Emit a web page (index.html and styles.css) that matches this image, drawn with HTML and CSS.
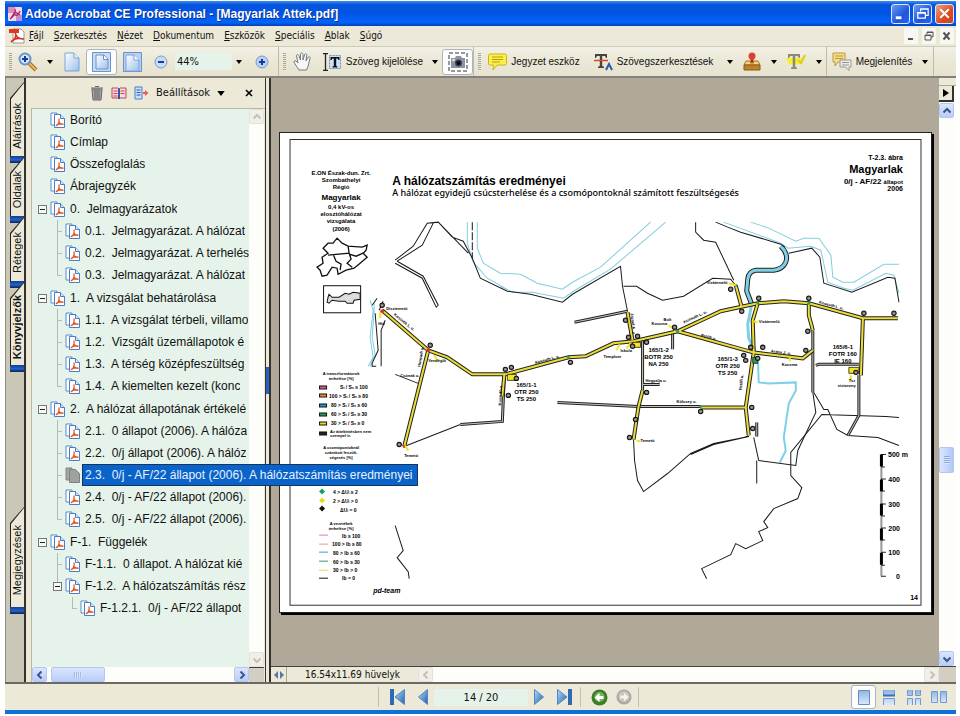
FILE: index.html
```html
<!DOCTYPE html>
<html lang="hu">
<head>
<meta charset="utf-8">
<title>Adobe Acrobat CE Professional - [Magyarlak Attek.pdf]</title>
<link rel="stylesheet" href="styles.css">
</head>
<body>
<svg class="defs" aria-hidden="true">
  <defs>
    <linearGradient id="gPage" x1="0" y1="0" x2="1" y2="1"><stop offset="0" stop-color="#fff"/><stop offset="1" stop-color="#9cc0ec"/></linearGradient>
    <linearGradient id="gBlue" x1="0" y1="0" x2="1" y2="1"><stop offset="0" stop-color="#b5dcf7"/><stop offset="1" stop-color="#1b62ae"/></linearGradient>
    <linearGradient id="gTile" x1="0" y1="0" x2="0" y2="1"><stop offset="0" stop-color="#8fb4e2"/><stop offset="1" stop-color="#dceafa"/></linearGradient>
  </defs>
  <symbol id="doc" viewBox="0 0 16 16">
    <path d="M1 1h6v12H1z" fill="#fff" stroke="#5b8bd0"/>
    <path d="M4.500 2.500h6l4 4v9h-10z" fill="#fff" stroke="#4a7cc8"/>
    <path d="M10.500 2.500v4h4" fill="#dbe8fa" stroke="#4a7cc8"/>
    <path d="M6 14c2-1 3.500-4 3-7.500M8.500 10c1.500 2 3 2.500 5 2.200M6 14c1-2 4-2.500 7.500-1.800" fill="none" stroke="#e4551f" stroke-width="1.300"/>
  </symbol>
  <symbol id="docgray" viewBox="0 0 16 16">
    <path d="M1 1h6v12H1z" fill="#a5a5a5" stroke="#858585"/>
    <path d="M4.500 2.500h6l4 4v9h-10z" fill="#a0a0a0" stroke="#808080"/>
  </symbol>
  <symbol id="page" viewBox="0 0 16 20">
    <path d="M1 1h9l5 5v13H1z" fill="url(#gPage)" stroke="#7ba3d8"/>
    <path d="M10 1v5h5" fill="#eef5fd" stroke="#7ba3d8"/>
  </symbol>
  <symbol id="down" viewBox="0 0 6 4"><path d="M0 0h6L3 4z" fill="#000"/></symbol>
  <symbol id="left" viewBox="0 0 8 8"><path d="M5.500 0.500L2 4l3.500 3.500" fill="none" stroke="currentColor" stroke-width="2"/></symbol>
  <symbol id="right" viewBox="0 0 8 8"><path d="M2.500 0.500L6 4 2.500 7.500" fill="none" stroke="currentColor" stroke-width="2"/></symbol>
  <symbol id="up" viewBox="0 0 8 8"><path d="M0.500 5.500L4 2l3.500 3.500" fill="none" stroke="currentColor" stroke-width="2"/></symbol>
  <symbol id="dn" viewBox="0 0 8 8"><path d="M0.500 2.500L4 6l3.500-3.500" fill="none" stroke="currentColor" stroke-width="2"/></symbol>
</svg>

<div class="window">
  <header class="titlebar">
    <svg class="app-icon" viewBox="0 0 14 14"><rect width="14" height="14" rx="1" fill="#f3d9ea"/><path d="M0 0h7v6H0z" fill="#e58bb0"/><path d="M8 8h6v6H8z" fill="#c58ad0"/><path d="M2 12C6 9 8 5 7 2M6 7c2 2 4 2 6-3M3 11l4-6 5 3" fill="none" stroke="#a4206a" stroke-width="1.300"/></svg>
    <h1>Adobe Acrobat CE Professional - [Magyarlak Attek.pdf]</h1>
    <div class="win-buttons">
      <button aria-label="Kis méret"><svg viewBox="0 0 18 18"><path d="M4 12h6v3H4z" fill="#fff"/></svg></button>
      <button aria-label="Előző méret"><svg viewBox="0 0 18 18"><path d="M7 7V4h8v7h-3M7 4.500h8M4 8h8v6H4zM4 8.500h8" fill="none" stroke="#fff" stroke-width="1.300"/></svg></button>
      <button class="close" aria-label="Bezárás"><svg viewBox="0 0 18 18"><path d="M4.500 4.500l9 9M13.500 4.500l-9 9" stroke="#fff" stroke-width="2"/></svg></button>
    </div>
  </header>

  <nav class="menubar">
    <svg class="menu-icon" viewBox="0 0 16 16"><path d="M4 1h8l3 3v11H4z" fill="#fff" stroke="#999"/><path d="M0 1h10v4H0z" fill="#dd3a22"/><path d="M2 14C7 11 8 8 6 4M7 7c1 3 4 4 8 4M2 14c3-4 8-4 13-3" fill="none" stroke="#d8301c" stroke-width="1.600"/></svg>
    <button><u>F</u>ájl</button>
    <button><u>S</u>zerkesztés</button>
    <button><u>N</u>ézet</button>
    <button><u>D</u>okumentum</button>
    <button><u>E</u>szközök</button>
    <button><u>S</u>peciális</button>
    <button><u>A</u>blak</button>
    <button><u>S</u>úgó</button>
    <div class="doc-buttons">
      <button aria-label="Dokumentum kis mérete"><svg viewBox="0 0 14 14"><path d="M4 9h5v2H4z" fill="#555"/></svg></button>
      <button aria-label="Dokumentum előző mérete"><svg viewBox="0 0 14 14"><path d="M5 5V3h6v5H9M5 3.500h6M3 6h6v5H3zM3 6.500h6" fill="none" stroke="#555"/></svg></button>
      <button aria-label="Dokumentum bezárása"><svg viewBox="0 0 14 14"><path d="M3.500 3.500l6 7M9.500 3.500l-6 7" stroke="#555" stroke-width="2"/></svg></button>
    </div>
  </nav>

  <div class="toolbar">
    <div class="group zoom-group">
      <span class="grip"></span>
      <button aria-label="Nagyítás"><svg width="20" height="20" viewBox="0 0 20 20"><path d="M11 11l7 7" stroke="#a06a20" stroke-width="4"/><path d="M11 11l7 7" stroke="#f0b957" stroke-width="2"/><circle cx="7" cy="7" r="5.500" fill="#d4e8fb" stroke="#6b93cb" stroke-width="2"/><path d="M4 7h6M7 4v6" stroke="#173a9c" stroke-width="2"/></svg></button>
      <button aria-label="Nagyítási eszközök"><svg width="6" height="4"><use href="#down"/></svg></button>
      <button aria-label="Tényleges méret"><svg width="16" height="20"><use href="#page"/></svg></button>
      <button class="on" aria-label="Teljes oldal"><svg width="19" height="20" viewBox="0 0 19 20"><path d="M.500.500h18v19H.500z" fill="#c9dbf2" stroke="#6b93cb"/><path d="M4 3h8l4 4v10H4z" fill="url(#gPage)" stroke="#6b93cb"/><path d="M11.500 3v4.500H16" fill="#fff" stroke="#6b93cb"/></svg></button>
      <button aria-label="Oldalszélesség"><svg width="19" height="20" viewBox="0 0 19 20"><path d="M.500.500h18v19H.500z" fill="#b7d0f0" stroke="#6b93cb"/><path d="M3 3h8l5 5v11H3z" fill="url(#gPage)" stroke="#7ba3d8"/><path d="M11 3v5h5" fill="#fff" stroke="#7ba3d8"/></svg></button>
      <button aria-label="Kicsinyítés"><svg width="14" height="14" viewBox="0 0 14 14"><circle cx="7" cy="7" r="6" fill="#c8dcf5" stroke="#7d9bc8"/><path d="M4 7h6" stroke="#173a9c" stroke-width="2"/></svg></button>
      <input class="field" type="text" value="44%" aria-label="Nagyítás mértéke">
      <button aria-label="Nagyítások listája"><svg width="6" height="4"><use href="#down"/></svg></button>
      <button aria-label="Nagyítás lépésenként"><svg width="14" height="14" viewBox="0 0 14 14"><circle cx="7" cy="7" r="6" fill="#b8d1f3" stroke="#7d9bc8"/><path d="M4 7h6M7 4v6" stroke="#173a9c" stroke-width="2"/></svg></button>
    </div>
    <div class="group select-group">
      <span class="grip"></span>
      <button aria-label="Kéz eszköz"><svg width="20" height="20" viewBox="0 0 20 20"><path d="M6 18C4 15 2 12 1 10c0-2 2-1.500 4 1L3.500 4c0-2 2-2 2.500 0l1.500 4V2.500c0-2 2.300-2 2.500 0V8l1.500-5c.5-2 2.500-1.500 2.200.5L13 9l2-3.500c1-1.500 2.700-.5 2 1-1 3-1.500 8-3.500 11.500z" fill="#f7f7f7" stroke="#77797f"/></svg></button>
      <button><svg width="20" height="18" viewBox="0 0 20 18"><path d="M1 .500h5M1 17.500h5M3.500.500v17" stroke="#222" stroke-width="1.300"/><path d="M7.500 2.500h11v13h-11z" fill="#cfdff4" stroke="#6f8fbf" stroke-dasharray="2 1"/><path d="M8.500 4h9v3h-1l-1-1.500h-1.300V13l1.300.5v1h-5v-1l1.300-.5V5.500h-1.300l-1 1.500h-1z" fill="#111"/></svg>Szöveg kijelölése</button>
      <button aria-label="Kijelölő eszközök"><svg width="6" height="4"><use href="#down"/></svg></button>
      <button class="on" aria-label="Pillanatkép"><svg width="20" height="20" viewBox="0 0 20 20"><path d="M1 1h18v18H1z" fill="#fff" stroke="#333" stroke-dasharray="4 2"/><path d="M3 6h4l1-2h5l1 2h3v10H3z" fill="#8c93a2"/><circle cx="10.500" cy="11" r="3.500" fill="#3a4050"/><circle cx="10.500" cy="11" r="2" fill="#0c0d14"/><circle cx="5.500" cy="8" r="1.300" fill="#dfe5ee"/></svg></button>
    </div>
    <div class="group comment-group">
      <span class="grip"></span>
      <button><svg width="19" height="18" viewBox="0 0 19 18"><path d="M2 1h15q1.500 0 1.500 1.500v8q0 1.500-1.500 1.500H9l-4 5 .5-5H2Q.500 12 .500 10.500v-8Q.500 1 2 1z" fill="#fbf04a" stroke="#c9b51a"/><path d="M4 4h11M4 6.500h11M4 9h8" stroke="#b5a010"/></svg>Jegyzet eszköz</button>
      <button><svg width="19" height="20" viewBox="0 0 19 20"><path d="M1 2h12v4h-1l-1-2H8.200v10l1.800.7V16H4v-1.300l1.800-.7V4H3L2 6H1z" fill="#444"/><path d="M0 8.500h14" stroke="#e0452a" stroke-width="1.500"/><path d="M12 18l3-6 3 6" fill="none" stroke="#3456b4" stroke-width="2"/></svg>Szövegszerkesztések</button>
      <button aria-label="Szövegszerkesztések listája"><svg width="6" height="4"><use href="#down"/></svg></button>
      <button aria-label="Bélyegző"><svg width="18" height="19" viewBox="0 0 18 19"><path d="M7.500 6h3v5h-3z" fill="#c03020"/><circle cx="9" cy="4" r="3.500" fill="#dc4030"/><path d="M3 9h4.500v2h3V9H15l2 4H1z" fill="#f4d284" stroke="#a87320"/><path d="M1 13h16v5H1z" fill="#bd812e" stroke="#8a5a16"/></svg></button>
      <button aria-label="Bélyegzők listája"><svg width="6" height="4"><use href="#down"/></svg></button>
      <button aria-label="Kiemelés"><svg width="20" height="17" viewBox="0 0 20 17"><path d="M0 5h18l-2 6H3z" fill="#f8ee30"/><path d="M2 1h12v4h-1l-1.500-2H9.300v11l1.700.7V16H5v-1.300l1.700-.7V3H4.500L3 5H2z" fill="#8b8b7a"/><path d="M12 7l3 3 4-8" fill="none" stroke="#dccb2a" stroke-width="2"/></svg></button>
      <button aria-label="Kiemelések listája"><svg width="6" height="4"><use href="#down"/></svg></button>
    </div>
    <div class="group show-group">
      <button><svg width="20" height="19" viewBox="0 0 20 19"><path d="M1 1h12v9H6l-3 4V10H1z" fill="#f6dc86" stroke="#b99a45"/><path d="M3 4h8M3 6.500h8" stroke="#b99a45"/><path d="M8 8h11v7h-2v3.500L13.500 15H8z" fill="#e9e9e6" stroke="#999"/><path d="M10 10.500h7M10 13h7" stroke="#999"/></svg>Megjelenítés</button>
      <button aria-label="Megjelenítés listája"><svg width="6" height="4"><use href="#down"/></svg></button>
    </div>
  </div>

  <main class="body">
    <div class="tabs">
      <button class="tab t1"><span>Aláírások</span></button>
      <button class="tab t2"><span>Oldalak</span></button>
      <button class="tab t3"><span>Rétegek</span></button>
      <button class="tab t4"><span>Könyvjelzők</span></button>
      <button class="tab t5"><span>Megjegyzések</span></button>
    </div>

    <aside class="panel">
      <div class="panel-head">
        <button aria-label="Törlés"><svg width="14" height="16" viewBox="0 0 14 16"><path d="M2 4h10l-1 11H3z" fill="#a5a5a5" stroke="#666"/><path d="M1 3h12M5 1.500h4M5 5v9M7 5v9M9 5v9" stroke="#666"/></svg></button>
        <button aria-label="Új könyvjelző"><svg width="16" height="14" viewBox="0 0 16 14"><path d="M1 2h6l1 1 1-1h6v10H9l-1 1-1-1H1z" fill="#f8dcdc" stroke="#b04a55"/><path d="M8 3v10" stroke="#3057b5" stroke-width="2"/><path d="M2.500 5h4M2.500 7.500h4M9.500 5h4M9.500 7.500h4M2.500 10h4" stroke="#d0404a"/></svg></button>
        <button aria-label="Kibontás"><svg width="15" height="14" viewBox="0 0 15 14"><path d="M1 1h7v12H1z" fill="#cfe1f7" stroke="#4a7cc8"/><path d="M2.500 4h4M2.500 6.500h4M2.500 9h4" stroke="#2858b0"/><path d="M9 7h3" stroke="#e06050" stroke-width="2"/><path d="M11 4l3.500 3L11 10z" fill="#e06050"/></svg></button>
        <button class="options">Beállítások<svg width="8" height="5" viewBox="0 0 6 4"><path d="M0 0h6L3 4z"/></svg></button>
        <button class="panel-close" aria-label="Panel bezárása"><svg width="8" height="8" viewBox="0 0 8 8"><path d="M1 1l6 6M7 1L1 7" stroke="#000" stroke-width="1.600"/></svg></button>
      </div>
      <div class="tree-area">
        <ul class="tree">
          <li><div class="row"><svg class="ico"><use href="#doc"/></svg><span>Borító</span></div></li>
          <li><div class="row"><svg class="ico"><use href="#doc"/></svg><span>Címlap</span></div></li>
          <li><div class="row"><svg class="ico"><use href="#doc"/></svg><span>Összefoglalás</span></div></li>
          <li><div class="row"><svg class="ico"><use href="#doc"/></svg><span>Ábrajegyzék</span></div></li>
          <li class="branch"><div class="row"><button class="toggle" aria-label="Összecsukás"></button><svg class="ico"><use href="#doc"/></svg><span>0.  Jelmagyarázatok</span></div>
            <ul>
              <li><div class="row"><svg class="ico"><use href="#doc"/></svg><span>0.1.  Jelmagyarázat. A hálózat</span></div></li>
              <li><div class="row"><svg class="ico"><use href="#doc"/></svg><span>0.2.  Jelmagyarázat. A terhelés</span></div></li>
              <li><div class="row"><svg class="ico"><use href="#doc"/></svg><span>0.3.  Jelmagyarázat. A hálózat</span></div></li>
            </ul></li>
          <li class="branch"><div class="row"><button class="toggle" aria-label="Összecsukás"></button><svg class="ico"><use href="#doc"/></svg><span>1.  A vizsgálat behatárolása</span></div>
            <ul>
              <li><div class="row"><svg class="ico"><use href="#doc"/></svg><span>1.1.  A vizsgálat térbeli, villamo</span></div></li>
              <li><div class="row"><svg class="ico"><use href="#doc"/></svg><span>1.2.  Vizsgált üzemállapotok é</span></div></li>
              <li><div class="row"><svg class="ico"><use href="#doc"/></svg><span>1.3.  A térség középfeszültség</span></div></li>
              <li><div class="row"><svg class="ico"><use href="#doc"/></svg><span>1.4.  A kiemelten kezelt (konc</span></div></li>
            </ul></li>
          <li class="branch"><div class="row"><button class="toggle" aria-label="Összecsukás"></button><svg class="ico"><use href="#doc"/></svg><span>2.  A hálózat állapotának értékelé</span></div>
            <ul>
              <li><div class="row"><svg class="ico"><use href="#doc"/></svg><span>2.1.  0 állapot (2006). A hálóza</span></div></li>
              <li><div class="row"><svg class="ico"><use href="#doc"/></svg><span>2.2.  0/j állapot (2006). A hálóz</span></div></li>
              <li><div class="row"><svg class="ico"><use href="#docgray"/></svg><span class="picked">2.3.  0/j - AF/22 állapot (2006). A hálózatszámítás eredményei</span></div></li>
              <li><div class="row"><svg class="ico"><use href="#doc"/></svg><span>2.4.  0/j - AF/22 állapot (2006).</span></div></li>
              <li><div class="row"><svg class="ico"><use href="#doc"/></svg><span>2.5.  0/j - AF/22 állapot (2006).</span></div></li>
            </ul></li>
          <li class="branch"><div class="row"><button class="toggle" aria-label="Összecsukás"></button><svg class="ico"><use href="#doc"/></svg><span>F-1.  Függelék</span></div>
            <ul>
              <li><div class="row"><svg class="ico"><use href="#doc"/></svg><span>F-1.1.  0 állapot. A hálózat kié</span></div></li>
              <li><div class="row"><button class="toggle" aria-label="Összecsukás"></button><svg class="ico"><use href="#doc"/></svg><span>F-1.2.  A hálózatszámítás rész</span></div>
                <ul>
                  <li><div class="row"><svg class="ico"><use href="#doc"/></svg><span>F-1.2.1.  0/j - AF/22 állapot</span></div></li>
                </ul></li>
            </ul></li>
        </ul>
        <div class="vscroll off">
          <button aria-label="Fel"><svg width="8" height="8"><use href="#up"/></svg></button>
          <button aria-label="Le"><svg width="8" height="8"><use href="#dn"/></svg></button>
        </div>
        <div class="hscroll">
          <button aria-label="Balra"><svg width="8" height="8"><use href="#left"/></svg></button>
          <span class="thumb"></span>
          <button aria-label="Jobbra"><svg width="8" height="8"><use href="#right"/></svg></button>
        </div>
        <span class="corner"></span>
      </div>
    </aside>

    <div class="splitter"><span></span></div>

    <section class="viewer">
      <div class="canvas">
        <svg class="sheet" viewBox="280 133 650 479" role="img" aria-label="A hálózatszámítás eredményei">
          <defs>
            <g id="n"><circle r="2.200" fill="#777" stroke="#111"/><path d="M-1 0h2" stroke="#ccc" stroke-width=".600"/></g>
          </defs>
          <rect x="290" y="139.500" width="630" height="465" fill="none" stroke="#333"/>

          <g class="mid bold">
            <text class="s6" x="341" y="175">E.ON Észak-dun. Zrt.</text>
            <text class="s6" x="341" y="182">Szombathelyi</text>
            <text class="s6" x="341" y="189">Régió</text>
            <text class="s8" x="341" y="200">Magyarlak</text>
            <text class="s6" x="341" y="209">0,4 kV-os</text>
            <text class="s6" x="341" y="216">elosztóhálózat</text>
            <text class="s6" x="341" y="223">vizsgálata</text>
            <text class="s6" x="341" y="231">(2006)</text>
          </g>
          <text class="s12 bold" x="392" y="185">A hálózatszámítás eredményei</text>
          <text class="s9 subtitle" x="392" y="196">A hálózat egyidejű csúcsterhelése és a csomópontoknál számított feszültségesés</text>
          <g class="end">
            <text class="s7 bold" x="902" y="160">T-2.3. ábra</text>
            <text class="s11 bold" x="902" y="173">Magyarlak</text>
            <text class="s8 bold" x="902" y="184">0/j - AF/22 <tspan class="s6">állapot</tspan></text>
            <text class="s7 bold" x="902" y="191">2006</text>
          </g>

          <g fill="none" stroke="#111" stroke-width="1.300">
            <path d="M337 238L342 243 348 246 362 247 367 245 366 250 363 253 367 257 360 263 354 268 346 270 338 274 337 268 332 267 327 275 322 276 320 270 317 267 323 263 322 257 328 253 323 248 328 243 333 243Z"/>
            <path d="M348 246L349 253 328 255 M333 254L336 261 341 264 340 270 M349 253L351 259 347 263 352 267 M349 254L356 256 363 253"/>
            <rect x="323.500" y="285.500" width="37" height="27" stroke-width="1"/>
            <path d="M329 294l3 3 7 0 6-4 4 1 4-2 7 1v6l-6 1-1 3h-6l-2-2h-6l-7-1-3 3-2-1 1-5z" fill="#ddd" stroke-width="1"/>
          </g>

          <g class="water">
            <path d="M467 222v21l6 19 14 16 23 13M477 222v26l6 15 17 10 20 1 17 9 25 6 10-7 28-15 50-45M500 286l12 6h20l31 6 10-7 37-22 55-47"/>
            <path d="M723 222l57 21 7 5 23-2 10 4 7 32 16 6 9 2 33-17 8 2 5 18M750 222l18 6 27 13 8-3h15l12 17 2 22 10 5h11l30-18h15"/>
            <path d="M370 300l3 10-3 27 3 20-5 9M374 303v8l-2 26 3 17-5 12"/>
          </g>
          <path class="stream outline" d="M780 246q8 8 5 16-3 7-12 8h-18q-7 1-8 9l-1 12 5 13"/>
          <path class="stream" d="M780 246q8 8 5 16-3 7-12 8h-18q-7 1-8 9l-1 12 5 13-4 20 1 14 6 12"/>
          <path class="stream thin" d="M757 355l1 27 10 1 27-1v8l-7 13-5 34 2 13-6 12"/>

          <g class="land">
            <path d="M395 260l18-14 14-23 11-1 14 15 11 4 9 17 8 20 27 13 23 3 32 8 10-8 48-28 2 20 5 25 5 26M397 261l25-16 11-22M438 222l30 31"/>
            <path d="M472 222v36" stroke-dasharray="8 2"/>
            <path d="M397 261l26 15 15 29-2 2-14-29-27-15"/>
            <path d="M623 286h13l11 7 15 7 21-4 29-18 18 1 4 5M695 222v10l8 8 12 2 18 38M715 222l12 5 13 5 40 12 4 3M788 253l23-5 8 9 4 26 28 9 36-15 7 1 4 24"/>
            <path d="M372 305l5-7M383 301l-4 9M375 313l3 37-6 13v3l4 0M385 320l-4 10v36M395 374l23 9M404 446l56-22"/>
            <path d="M633 439l1 21 3 20 6 11 24-18 23-20 23-10 35-7M690 454l23-10 35-8M753 437l5 23 37 5 2-15 18-38-3-20v-42M756 460v23"/>
            <path d="M813 392l10 17h4l9 20 11 6 30 2 21 8M898 417l-13-1-64-2-31 38v23l11 12-4 11-24 10-10 13 4 6-9 4 4 9-17 8-10-5-5 11-29 14 5 10"/>
            <path d="M395 525l8 25-6 7 11 14 1 7"/>
          </g>

          <g class="road-edge">
            <path d="M460 424l42-3 2-46M557 402l81 4 62 0M642 384h17M672 331v18M574 322l53-11M756 422v14M812 350v42M815 365l3-1h40M858 375v40l-11 20"/>
            <path d="M642 340v50M812 330v20"/>
          </g>
          <g class="road-gray">
            <path d="M460 424l42-3 2-46M557 402l81 4 62 0M642 384h17M672 331v18M574 322l53-11M756 422v14M812 350v42M815 365l3-1h40M858 375v40l-11 20"/>
            <path d="M642 340v50M812 330v20"/>
          </g>
          <g>
            <path class="road-edge wide" d="M382 310l46 40 19 7 25 17h33l63-17 17-1 28-13 20-2 44-10 43-20 37-8 26-2 25 2 54 15h35"/>
            <path class="road-edge wide" d="M428 350l-24 96M504 374l-2 22M677 331l75 21 50 6 10-8M735 285l6 22M757 303l-5 17 1 32-8 55 3 28M808 303v12l4 15M862 318l-2 57M642 390l-4 16-5 33M700 407h46M627 312l5 28"/>
            <path class="road" d="M382 310l46 40 19 7 25 17h33l63-17 17-1 28-13 20-2 44-10 43-20 37-8 26-2 25 2 54 15h35"/>
            <path class="road" d="M428 350l-24 96M504 374l-2 22M677 331l75 21 50 6 10-8M735 285l6 22M757 303l-5 17 1 32-8 55 3 28M808 303v12l4 15M862 318l-2 57M642 390l-4 16-5 33M700 407h46M627 312l5 28"/>
          </g>
          <g fill="#f5e615" stroke="#222" stroke-width=".800">
            <path d="M507 374h9v6h-9zM632 342h8v5h-8zM848 367h10v6h-10z"/>
            <path d="M752 357h5v6h-5z" fill="#1d9c66"/>
          </g>
          <g fill="#d8362a"><circle cx="382" cy="311" r="2"/><circle cx="428" cy="350" r="2"/><circle cx="404" cy="446" r="1.500"/></g>
          <g fill="#27a05e"><circle cx="677" cy="331" r="1.500"/><circle cx="757" cy="303" r="1.500"/><circle cx="568" cy="357" r="1.500"/><circle cx="700" cy="406" r="1.500"/><circle cx="735" cy="285" r="1.500"/><circle cx="808" cy="303" r="1.500"/></g>
          <path d="M408 450l-3-5M630 343l-4 5M619 344l-3 6M668 325l7 5M728 283l7 2M789 361v-4M850 375v5M434 355l3 5M636 440l4 1M753 321l4 1M380 318v-6" stroke="#f3e51c" stroke-width="2"/>
          <g>
            <use href="#n" x="382" y="305"/><use href="#n" x="430" y="345"/><use href="#n" x="399" y="444"/><use href="#n" x="505" y="369"/><use href="#n" x="511" y="367"/><use href="#n" x="516" y="378"/><use href="#n" x="508" y="395"/><use href="#n" x="570" y="362"/><use href="#n" x="625" y="320"/><use href="#n" x="628" y="337"/><use href="#n" x="637" y="336"/><use href="#n" x="646" y="342"/><use href="#n" x="632" y="346"/><use href="#n" x="674" y="327"/><use href="#n" x="730" y="289"/><use href="#n" x="741" y="311"/><use href="#n" x="758" y="298"/><use href="#n" x="808" y="298"/><use href="#n" x="863" y="313"/><use href="#n" x="893" y="313"/><use href="#n" x="807" y="331"/><use href="#n" x="805" y="350"/><use href="#n" x="750" y="347"/><use href="#n" x="762" y="347"/><use href="#n" x="743" y="355"/><use href="#n" x="757" y="358"/><use href="#n" x="745" y="360"/><use href="#n" x="646" y="392"/><use href="#n" x="700" y="411"/><use href="#n" x="751" y="407"/><use href="#n" x="752" y="428"/><use href="#n" x="629" y="437"/><use href="#n" x="635" y="419"/><use href="#n" x="855" y="372"/>
          </g>
          <g class="s4 bold">
            <text x="386" y="310">Dísztemető</text><text x="378" y="325">Híd</text><text x="400" y="377">Csónak u.</text><text x="428" y="362">Vendéglő</text><text x="404" y="457">Temető</text>
            <text x="603" y="358">Templom</text><text x="620" y="352">Iskola</text><text x="663" y="321">Bolt</text><text x="651" y="325">Kocsma</text><text x="706" y="284">Vízátemelő</text><text x="758" y="323">Vízátemelő</text><text x="640" y="442">Temető</text>
            <text x="781" y="366">Kocsma</text><text x="848" y="382">Tsz</text><text x="837" y="387">víztorony</text><text x="645" y="382">Hegyalja u.</text><text x="676" y="403">Kölcsey u.</text>
            <text transform="rotate(39 392 315)" x="393" y="314">Kossuth L. u.</text><text transform="rotate(-15 545 362)" x="535" y="361">Kossuth L. u.</text><text transform="rotate(-25 684 324)" x="684" y="323">Kossuth L. u.</text><text transform="rotate(15 700 336)" x="700" y="336">Petőfi u.</text><text transform="rotate(15 818 303)" x="818" y="303">Kossuth L. u.</text><text transform="rotate(7 770 352)" x="770" y="352">Arany J. u.</text><text transform="rotate(-84 742 390)" x="742" y="389">Petőfi u.</text><text transform="rotate(-80 422 367)" x="422" y="365">Hunyadi u.</text><text transform="rotate(-88 501 405)" x="501" y="405">Kossuth u.</text><text transform="rotate(84 630 313)" x="630" y="313">József A. u.</text>
          </g>
          <g class="s6 bold mid">
            <text x="526" y="387">165/1-1</text><text x="526" y="394">OTR 250</text><text x="526" y="401">TS 250</text>
            <text x="658" y="352">165/1-2</text><text x="658" y="359">BOTR 250</text><text x="658" y="366">NA 250</text>
            <text x="727" y="361">165/1-3</text><text x="727" y="368">OTR 250</text><text x="727" y="375">TS 250</text>
            <text x="842" y="349">165/6-1</text><text x="842" y="356">FOTR 160</text><text x="842" y="363">IE 160</text>
          </g>

          <g class="s4 bold mid">
            <text x="341" y="375">A transzformátorok</text><text x="341" y="380">terhelése [%]</text>
            <text x="341" y="449">A csomópontoknál</text><text x="341" y="454">számított feszült-</text><text x="341" y="459">ségesés [%]</text>
            <text x="341" y="524">A vezetékek</text><text x="341" y="529">terhelése [%]</text>
          </g>
          <g stroke="#111">
            <path d="M319.500 385.500h7v3h-7z" fill="#e2578f"/><path d="M319.500 393.500h7v3h-7z" fill="#ef8c3a"/><path d="M319.500 403.500h7v3h-7z" fill="#2396c8"/><path d="M319.500 412.500h7v3h-7z" fill="#18a050"/><path d="M319.500 421.500h7v3h-7z" fill="#eadb22"/><path d="M319.500 431.500h7v3h-7z" fill="#222"/>
          </g>
          <g class="s5 bold">
            <text x="340" y="389">S<tspan class="s3">t</tspan> / S<tspan class="s3">n</tspan> ≥ 100</text>
            <text x="329" y="398">100 &gt; S<tspan class="s3">t</tspan> / S<tspan class="s3">n</tspan> ≥ 80</text>
            <text x="331" y="407">80 &gt; S<tspan class="s3">t</tspan> / S<tspan class="s3">n</tspan> ≥ 60</text>
            <text x="331" y="416">60 &gt; S<tspan class="s3">t</tspan> / S<tspan class="s3">n</tspan> ≥ 30</text>
            <text x="331" y="425">30 &gt; S<tspan class="s3">t</tspan> / S<tspan class="s3">n</tspan> ≥ 0</text>
            <text class="s4" x="330" y="433">Az áttekintésben nem</text><text class="s4" x="330" y="437">szerepel tr.</text>
            <text x="333" y="493">4 &gt; ΔU<tspan class="s3">i</tspan> ≥ 2</text><text x="333" y="502">2 &gt; ΔU<tspan class="s3">i</tspan> &gt; 0</text><text x="340" y="511">ΔU<tspan class="s3">i</tspan> = 0</text>
            <text x="342" y="537">Ib ≥ 100</text><text x="332" y="545">100 &gt; Ib ≥ 80</text><text x="333" y="554">80 &gt; Ib ≥ 60</text><text x="333" y="563">60 &gt; Ib ≥ 30</text><text x="333" y="571">30 &gt; Ib &gt; 0</text><text x="342" y="579">Ib = 0</text>
          </g>
          <path d="M322 488l3 3-3 3-3-3z" fill="#18a060"/><path d="M322 497l3 3-3 3-3-3z" fill="#eadb22"/><path d="M322 505l3 3-3 3-3-3z" fill="#111"/>
          <g fill="none"><path d="M319 534.500h9" stroke="#e878b8"/><path d="M319 543.500h9" stroke="#ee9a80"/><path d="M319 551.500h9" stroke="#3ba0c8"/><path d="M319 560.500h9" stroke="#2f9c62"/><path d="M319 569.500h9" stroke="#e2dc50"/><path d="M319 577.500h9" stroke="#111"/></g>
          <text class="s7 bold ital" x="373" y="592">pd-team</text>

          <path d="M880.500 454v122M880 454h5M880 466.500h4M880 478.500h5M880 490.500h4M880 503.500h5M880 515.500h4M880 527.500h5M880 539.500h4M880 551.500h5M880 564.500h4M880 575.500h5" stroke="#222" fill="none"/>
          <path d="M880.500 454v12M880.500 479v12M880.500 503v12M880.500 528v12M880.500 552v12" stroke="#000" stroke-width="3"/>
          <path d="M880.500 467v11M880.500 491v12M880.500 516v11M880.500 540v11M880.500 565v10" stroke="#999" stroke-width="2"/>
          <g class="s7 bold end">
            <text x="907" y="457">500 m</text><text x="899" y="481">400</text><text x="899" y="506">300</text><text x="899" y="530">200</text><text x="899" y="554">100</text><text x="899" y="578">0</text>
            <text x="917" y="599">14</text>
          </g>
        </svg>
      </div>
      <div class="vscroll doc-scroll">
        <span class="split"></span>
        <button class="flyout" aria-label="Útmutató"><svg width="6" height="8" viewBox="0 0 6 8"><path d="M0 0l6 4-6 4z"/></svg></button>
        <button aria-label="Fel"><svg width="8" height="8"><use href="#up"/></svg></button>
        <span class="thumb"></span>
        <button aria-label="Le"><svg width="8" height="8"><use href="#dn"/></svg></button>
      </div>
      <div class="docbar">
        <button class="resize" aria-label="Átméretezés"><svg width="10" height="8" viewBox="0 0 10 8"><path d="M4 0v8L0 4zM6 0v8l4-4z" fill="#5677a8"/></svg></button>
        <span class="size">16.54x11.69 hüvelyk</span>
        <div class="hscroll off">
          <button aria-label="Balra"><svg width="8" height="8"><use href="#left"/></svg></button>
          <button aria-label="Jobbra"><svg width="8" height="8"><use href="#right"/></svg></button>
        </div>
      </div>
      <span class="corner"></span>
    </section>
  </main>

  <footer class="status">
    <div class="pager">
      <button aria-label="Első oldal"><svg width="15" height="16" viewBox="0 0 15 16"><path d="M0 0h4v16H0z" fill="#2c6cb4"/><path d="M14.500.500v15L5 8z" fill="url(#gBlue)" stroke="#4d86c2"/></svg></button>
      <button aria-label="Előző oldal"><svg width="10" height="16" viewBox="0 0 10 16"><path d="M9.500.500v15L.500 8z" fill="url(#gBlue)" stroke="#4d86c2"/></svg></button>
      <input class="field" type="text" value="14 / 20" aria-label="Oldal">
      <button aria-label="Következő oldal"><svg width="10" height="16" viewBox="0 0 10 16"><path d="M.500.500v15L9.500 8z" fill="url(#gBlue)" stroke="#4d86c2"/></svg></button>
      <button aria-label="Utolsó oldal"><svg width="15" height="16" viewBox="0 0 15 16"><path d="M11 0h4v16h-4z" fill="#2c6cb4"/><path d="M.500.500v15L10 8z" fill="url(#gBlue)" stroke="#4d86c2"/></svg></button>
      <span class="line"></span>
      <button aria-label="Előző nézet"><svg width="17" height="17" viewBox="0 0 17 17"><circle cx="8.500" cy="8.500" r="8" fill="#3f7d28"/><circle cx="8.500" cy="8" r="5" fill="#78b25a"/><path d="M3.500 8.500l5-4.500v3h4v3h-4v3z" fill="#fff"/></svg></button>
      <button aria-label="Következő nézet"><svg width="16" height="16" viewBox="0 0 17 17"><circle cx="8.500" cy="8.500" r="8" fill="#aaa79e"/><circle cx="8.500" cy="8" r="6" fill="#c7c5bd"/><path d="M13.500 8.500l-5-4.500v3h-4v3h4v3z" fill="#f4f3ee"/></svg></button>
      <span class="line"></span>
    </div>
    <div class="views">
      <button class="on" aria-label="Egy oldal"><svg width="12" height="15" viewBox="0 0 12 15"><path d="M.500.500h11v14H.500z" fill="url(#gTile)" stroke="#5f8fd0"/></svg></button>
      <button aria-label="Folyamatos"><svg width="14" height="15" viewBox="0 0 14 15"><path d="M1.500 0v5.500h11V0M1.500 15V8.500h11V15" fill="url(#gTile)" stroke="#6f9ad2"/><path d="M1 5.500h12" stroke="#3570b8" stroke-width="2"/></svg></button>
      <button aria-label="Folyamatos, szemközti"><svg width="14" height="15" viewBox="0 0 14 15"><path d="M.500 0v5.500h5V0M8.500 0v5.500h5V0M.500 15V8.500h5V15M8.500 15V8.500h5V15" fill="url(#gTile)" stroke="#6f9ad2"/></svg></button>
      <button aria-label="Szemközti"><svg width="16" height="12" viewBox="0 0 16 12"><path d="M.500.500h6v11h-6zM9.500.500h6v11h-6z" fill="url(#gTile)" stroke="#6f9ad2"/></svg></button>
    </div>
  </footer>
</div>
</body>
</html>
```
FILE: styles.css
```css
* { box-sizing: border-box; }

:root {
  --face: #ece9d8;
  --mint: #e6f3ea;
  --canvas: #b0a999;
  --ui: "DejaVu Sans Condensed", "DejaVu Sans", sans-serif;
  --text: "Liberation Sans", Arial, sans-serif;
}

body {
  margin: 0;
  background: #fff;
  font: 11px/14px var(--text);
  color: #111;
}

button {
  margin: 0;
  padding: 0;
  border: 0;
  background: none;
  color: inherit;
  font: inherit;
  display: flex;
  align-items: center;
  justify-content: center;
}

svg { display: block; flex: none; }
.defs { position: absolute; width: 0; height: 0; }

.window {
  display: flex;
  flex-direction: column;
  height: 100vh;
  border: solid #fff;
  border-width: 1px 4px 2px 5px;
}

/* Title bar */
.titlebar {
  display: flex;
  align-items: center;
  flex: none;
  height: 25px;
  padding: 0 2px;
  background: linear-gradient(#3a8cf5, #0855dd 15%, #0054e3 50%, #0364fb 85%, #0340b5);
}
.app-icon { width: 14px; height: 14px; margin: 0 3px 0 1px; }
.titlebar h1 {
  flex: 1;
  margin: 0;
  color: #fff;
  font: bold 12px/16px var(--text);
  text-shadow: 1px 1px #0a2f8f;
}
.win-buttons { display: flex; gap: 3px; }
.win-buttons button {
  width: 19px;
  height: 20px;
  border: 1px solid #dbe6fb;
  border-radius: 3px;
  background: linear-gradient(135deg, #6a9bf5, #1f55dd 60%, #2a66ee);
}
.win-buttons svg { width: 17px; height: 17px; }
.win-buttons .close { background: linear-gradient(135deg, #f2a080, #dd4a20 60%, #d0411c); }

/* Menu bar */
.menubar {
  display: flex;
  align-items: center;
  flex: none;
  gap: 10px;
  height: 20px;
  padding: 0 2px 0 4px;
  background: var(--face);
  font: 10px/14px var(--ui);
}
.menu-icon { width: 16px; height: 16px; margin-right: -6px; }
.menubar > button { display: block; }
.doc-buttons { display: flex; gap: 4px; margin-left: auto; }
.doc-buttons button { width: 14px; height: 16px; background: #f8f7f2; }
.doc-buttons svg { width: 14px; height: 14px; }

/* Toolbar */
.toolbar {
  display: flex;
  flex: none;
  height: 32px;
  background: linear-gradient(#f3f1e6, var(--face) 40%, #e6e2cf);
  border-top: 1px solid #cfcbb8;
  border-bottom: 2px solid #84817a;
  font-size: 10px;
}
.group {
  display: grid;
  align-items: center;
  border-right: 1px solid #bfbba8;
  white-space: nowrap;
}
.zoom-group { grid-template-columns: 9px 28px 16px 28px 31px 30px 28px 57px 14px 32px; }
.select-group { grid-template-columns: 9px 30px 109px 15px 31px; }
.comment-group { grid-template-columns: 9px 102px 137px 15px 30px 14px 30px 15px; }
.show-group { grid-template-columns: 90px 16px; }
.group button { gap: 4px; }
.grip {
  width: 3px;
  height: 18px;
  margin-left: 4px;
  background: repeating-linear-gradient(#aaa797 0 1px, var(--face) 1px 2px);
}
.on {
  height: 26px;
  border: 1px solid #a8b5c4;
  border-radius: 3px;
  background: #fdfdfc;
}
.field {
  width: 100%;
  height: 17px;
  padding: 0 2px;
  border: 0;
  background: var(--mint);
  color: #111;
  font: 11px/16px var(--ui);
}

/* Body */
.body {
  display: grid;
  grid-template-columns: 21px 239px 6px 1fr;
  flex: 1;
  min-height: 0;
  border-bottom: 2px solid #6b6962;
  background: var(--face);
}

/* Side tabs */
.tabs {
  display: flex;
  flex-direction: column;
  padding: 4px 0 74px 4px;
  border-left: 1px solid #8f8c80;
  border-right: 2px solid #33322e;
  background: #cbc7b7;
}
.tab {
  position: relative;
  flex: none;
  width: 14px;
  margin-bottom: -6px;
  background: linear-gradient(to top, #0d2d6c 1px, #2663c8 3px, #123f92 7px, #222 7px);
  clip-path: polygon(0 16px, 100% 0, 100% 100%, 0 100%);
}
.tab::before {
  content: "";
  position: absolute;
  inset: 1px 0 7px 1px;
  background: var(--face);
  clip-path: polygon(0 16px, 100% 0, 100% 100%, 0 100%);
}
.tab span {
  position: relative;
  writing-mode: vertical-rl;
  transform: rotate(180deg);
}
.t1 { height: 81px; padding-top: 6px; }
.t2 { height: 66px; }
.t3 { height: 71px; }
.t4 { height: 90px; font-weight: bold; }
.t5 { height: 107px; margin-top: auto; }

/* Bookmark panel */
.panel {
  display: flex;
  flex-direction: column;
  min-width: 0;
}
.panel-head {
  display: flex;
  align-items: center;
  flex: none;
  gap: 7px;
  height: 30px;
  padding: 0 12px 0 64px;
}
.panel-head .options { gap: 7px; font: 11px/14px var(--ui); }
.panel-close { margin-left: auto; }
.tree-area {
  display: grid;
  grid-template: 1fr 15px / 1fr 15px;
  flex: 1;
  min-height: 0;
  margin-left: 5px;
  padding-right: 1px;
  border: solid #b9b6a6;
  border-width: 1px 0 0 1px;
}
.tree {
  min-width: 0;
  background: var(--mint);
  font: 12px/16px var(--text);
}
.tree, .tree ul { margin: 0; padding: 0; list-style: none; }
.tree ul { padding-left: 15px; }
.branch { margin-top: 1px; }
.tree li { position: relative; }
.row {
  position: relative;
  display: flex;
  align-items: center;
  gap: 4px;
  height: 22px;
  padding-left: 18px;
}
.ico { width: 16px; height: 16px; }
.row span { overflow: hidden; white-space: pre; }
.row .picked {
  position: absolute;
  z-index: 2;
  left: 35px;
  padding: 2px 4px 2px 2px;
  border: 1px solid #16345e;
  background: #0a63c9;
  color: #e8f2ff;
}
.toggle {
  position: absolute;
  left: 6px;
  width: 9px;
  height: 9px;
  border: 1px solid #777;
  background: linear-gradient(#222, #222) center / 5px 1px no-repeat #f6faf6;
}
.tree ul > li::before {
  content: "";
  position: absolute;
  left: 10px;
  top: 0;
  height: 100%;
  border-left: 1px solid #b4bdb5;
}
.tree ul > li:last-child::before { height: 11px; }
.tree ul > li > .row::before {
  content: "";
  position: absolute;
  left: 10px;
  width: 5px;
  border-top: 1px solid #b4bdb5;
}

/* Scroll bars */
.vscroll, .hscroll { display: flex; justify-content: space-between; background: #fdfdfa; }
.vscroll { flex-direction: column; }
.vscroll button, .hscroll button, .thumb {
  width: 15px;
  height: 15px;
  border: 1px solid #b3c7f2;
  border-radius: 2px;
  background: linear-gradient(#dbe6fd, #b9cdf9);
  color: #3c5488;
}
.vscroll.off button, .hscroll.off button {
  border-color: #e3e1d8;
  background: #f1efe8;
  color: #c4c2b8;
}
.hscroll .thumb {
  width: 54px;
  margin: 0 auto 0 4px;
  background: repeating-linear-gradient(90deg, #a3b9ea 0 1px, #dbe6fd 1px 2px) center / 8px 6px no-repeat, linear-gradient(#dbe6fd, #b9cdf9);
}
.corner { background: #d2cec2; border-top: 1px solid #44423c; }

.splitter {
  display: flex;
  align-items: center;
  border: solid #33322e;
  border-width: 0 2px 0 1px;
}
.splitter span { width: 3px; height: 27px; background: #2a5fc0; }

/* Document viewer */
.viewer {
  display: grid;
  grid-template: 1fr 16px / 1fr 17px;
  min-width: 0;
}
.canvas {
  display: flex;
  align-items: center;
  min-width: 0;
  padding: 1px 7px 0 8px;
  background: var(--canvas);
}
.sheet {
  flex: 1;
  min-width: 0;
  border: 1px solid #222;
  background: #fff;
  box-shadow: 2px 2px #000;
  font-family: var(--text);
}
.doc-scroll { justify-content: flex-start; }
.doc-scroll .split { height: 8px; background: var(--face); border-bottom: 1px solid #aaa797; }
.doc-scroll .flyout {
  height: 16px;
  margin-bottom: 1px;
  border: solid #333;
  border-width: 0 2px 2px 0;
  border-radius: 0;
  background: var(--face);
}
.doc-scroll .thumb {
  height: 26px;
  margin: 329px 0 auto;
  background: repeating-linear-gradient(#8fa9e4 0 1px, #dbe6fd 1px 2px) center / 6px 8px no-repeat, linear-gradient(90deg, #dbe6fd, #b0c7f8);
}
.docbar { display: flex; border-top: 1px solid #44423c; }
.resize { width: 16px; border-right: 1px solid #aaa797; }
.size { width: 131px; text-align: center; font: 10px/15px var(--ui); }
.docbar .hscroll { flex: 1; }

/* Sheet lettering and line work */
.s3 { font-size: 3px; }
.s4 { font-size: 4px; }
.s5 { font-size: 5px; }
.s6 { font-size: 6px; }
.s7 { font-size: 7px; }
.s8 { font-size: 8px; }
.s9 { font-size: 9px; }
.s11 { font-size: 11px; }
.s12 { font-size: 12px; }
.bold { font-weight: bold; }
.ital { font-style: italic; }
.subtitle { font-family: "Noto Sans", sans-serif; font-weight: 500; }
.mid { text-anchor: middle; }
.end { text-anchor: end; }
.water { fill: none; stroke: #83cde0; stroke-width: 1px; }
.stream { fill: none; stroke: #7fd0e6; stroke-width: 3px; }
.stream.thin { stroke-width: 2px; }
.outline { stroke: #222; stroke-width: 5px; }
.land { fill: none; stroke: #1a1a1a; stroke-width: 1px; }
.road-edge { fill: none; stroke: #222; stroke-width: 3px; }
.road-gray { fill: none; stroke: #c4c3b8; stroke-width: 1px; }
.road-edge.wide { stroke-width: 4px; }
.road { fill: none; stroke: #ecdc36; stroke-width: 2px; }

/* Status bar */
.status {
  display: flex;
  align-items: center;
  justify-content: space-between;
  flex: none;
  height: 30px;
  padding: 0 5px 0 373px;
  background: var(--face);
  border-bottom: 4px solid #0f70d8;
}
.pager {
  display: grid;
  grid-template-columns: 28px 23px 94px 22px 28px 3px 36px 14px 8px;
  align-items: center;
  padding-left: 4px;
  border-left: 1px solid #c4c0ae;
}
.pager .field { text-align: center; }
.line { height: 20px; border-left: 1px solid #c4c0ae; justify-self: end; }
.views { display: grid; grid-template-columns: 25px 25px 25px 25px; align-items: center; }
.views .on { height: 24px; }
```
